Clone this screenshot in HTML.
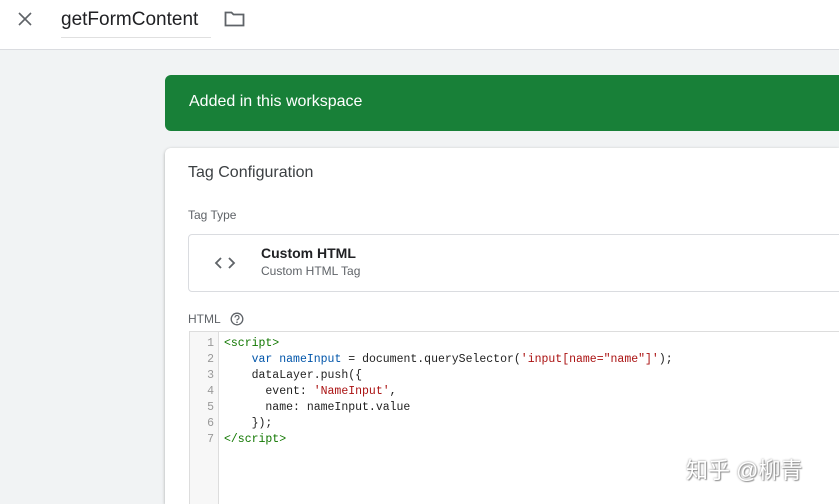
<!DOCTYPE html>
<html><head><meta charset="utf-8"><style>
*{margin:0;padding:0;box-sizing:border-box}
html,body{width:839px;height:504px;overflow:hidden}
body{background:#f1f3f4;font-family:"Liberation Sans","Noto Sans CJK SC",sans-serif;position:relative}
.top{position:absolute;left:0;top:0;width:839px;height:50px;background:#fff;border-bottom:1px solid #dadce0}
.title{position:absolute;left:61px;top:9px;font-size:19px;color:#202124;border-bottom:1px solid #e0e0e0;padding-bottom:6px;width:150px}
.banner{position:absolute;left:165px;top:75px;width:674px;height:56px;background:#188038;border-radius:6px 0 0 6px;color:#fff;font-size:16px;padding:18px 0 0 24px}
.card{position:absolute;left:165px;top:148px;width:674px;height:356px;background:#fff;border-radius:6px 0 0 0;box-shadow:0 1px 3px rgba(0,0,0,.3);overflow:hidden}
.h{position:absolute;left:23px;top:16px;font-size:16px;color:#3c4043}
.lbl{position:absolute;font-size:12px;color:#5f6368}
.tt{position:absolute;left:23px;top:86px;width:680px;height:58px;border:1px solid #dadce0;border-radius:4px}
.code{position:absolute;left:24px;top:183px;width:680px;height:180px;border:1px solid #ddd;font-family:"Liberation Mono",monospace;font-size:11.5px;line-height:16px}
.gut{position:absolute;left:0;top:0;width:29px;height:100%;background:#f7f7f7;border-right:1px solid #ddd;color:#999;text-align:right;padding:4px 4px 0 0}
.src{position:absolute;left:34px;top:4px;color:#222;white-space:pre}
.t{color:#170}.k{color:#05a}.v{color:#05a}.s{color:#a11}
</style></head><body>
<div class="top">
<svg style="position:absolute;left:17px;top:11px" width="16" height="16" viewBox="0 0 16 16"><path d="M2 2L14 14M14 2L2 14" stroke="#5f6368" stroke-width="1.6"/></svg>
<div class="title">getFormContent</div>
<svg style="position:absolute;left:224px;top:10px" width="21" height="18" viewBox="0 0 21 18"><path d="M1.5 2.5h6l2 2h10v11h-18z" fill="none" stroke="#5f6368" stroke-width="1.8"/></svg>
</div>
<div class="banner">Added in this workspace</div>
<div class="card">
<div class="h">Tag Configuration</div>
<div class="lbl" style="left:23px;top:60px">Tag Type</div>
<div class="tt">
<svg style="position:absolute;left:25px;top:21px" width="22" height="14" viewBox="0 0 22 14"><path d="M7 2L2 7L7 12M15 2L20 7L15 12" fill="none" stroke="#5f6368" stroke-width="1.8"/></svg>
<div style="position:absolute;left:72px;top:10px;font-size:14px;font-weight:bold;color:#202124">Custom HTML</div>
<div style="position:absolute;left:72px;top:29px;font-size:12px;color:#5f6368">Custom HTML Tag</div>
</div>
<div class="lbl" style="left:23px;top:164px">HTML</div>
<svg style="position:absolute;left:65px;top:164px" width="14" height="14" viewBox="0 0 14 14"><circle cx="7" cy="7" r="5.8" fill="none" stroke="#5f6368" stroke-width="1.3"/><path d="M5 5.5a2 2 0 1 1 2.5 1.9c-.4.2-.5.5-.5 1.1" fill="none" stroke="#5f6368" stroke-width="1.2"/><circle cx="7" cy="10.2" r=".8" fill="#5f6368"/></svg>
<div class="code"><div class="gut">1<br>2<br>3<br>4<br>5<br>6<br>7</div>
<div class="src"><span class="t">&lt;script&gt;</span>
    <span class="k">var</span> <span class="v">nameInput</span> = document.querySelector(<span class="s">'input[name="name"]'</span>);
    dataLayer.push({
      event: <span class="s">'NameInput'</span>,
      name: nameInput.value
    });
<span class="t">&lt;/script&gt;</span></div></div>
</div>
<div style="position:absolute;left:686px;top:453px;font-size:22px;color:#fff;text-shadow:0 0 2px #888,1px 1px 1px #999">知乎 @柳青</div>
</body></html>
